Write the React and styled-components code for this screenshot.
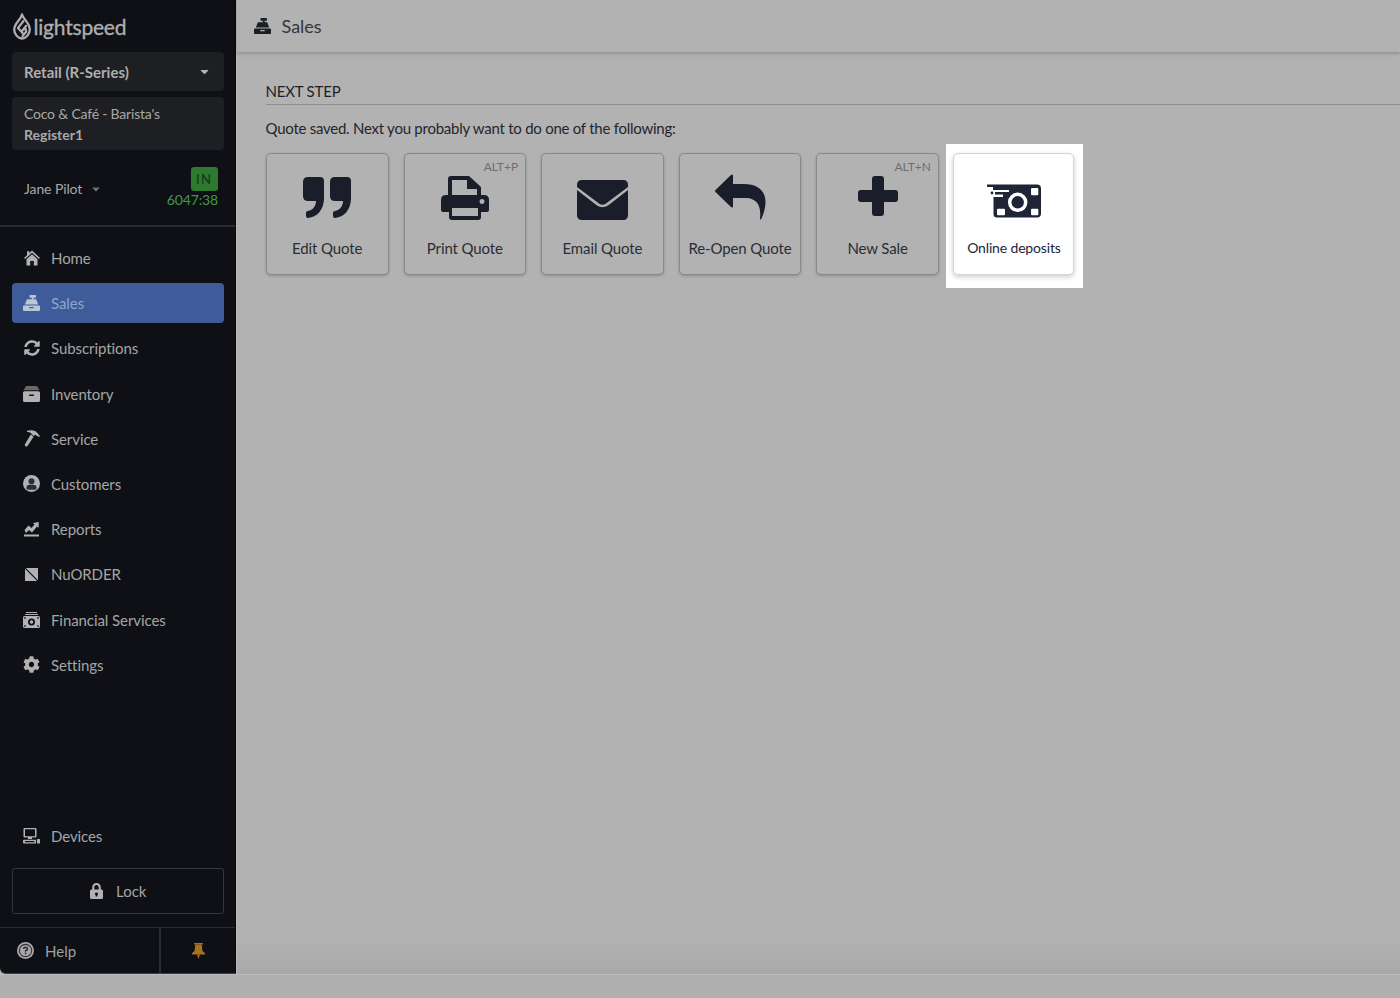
import React from 'react';
import styled, { createGlobalStyle } from 'styled-components';
import { FaSyncAlt, FaCog, FaCaretDown } from 'react-icons/fa';

const Global = createGlobalStyle`
  html, body { margin: 0; padding: 0; height: 100%; background: #b0b0b0; overflow: hidden; }
  body { font-family: Lato, "Open Sans", "Liberation Sans", sans-serif; }
`;

const Page = styled.div`
  width: 1400px; height: 998px; display: flex; flex-direction: column; background: #b0b0b0;
`;
const Top = styled.div`display: flex; height: 974px; flex: none;`;
const Strip = styled.div`flex: 1; background: #afafaf; border-top: 1px solid #bbbbbb;`;

const Sidebar = styled.aside`
  width: 236px; flex: none; display: flex; flex-direction: column; background: #0e1015;
  border-bottom-left-radius: 6px; border-right: 1px solid #08090c; border-bottom: 1px solid #3c3e44; box-sizing: border-box;
  color: #b4b4b4;
`;
const LogoRow = styled.div`
  height: 52px; padding: 0 0 0 12.5px; display: flex; align-items: center; gap: 3px; box-sizing: border-box; color: #aeaeae; flex: none;
`;
const LogoText = styled.span`
  font-size: 21px; font-weight: 400; letter-spacing: -0.2px; line-height: 1; -webkit-text-stroke: 0.35px currentColor;
`;
const Select = styled.div`
  margin: 0 11px 0 11.5px; height: 39px; background: #1d1f23; border-radius: 4px; display: flex; align-items: center; flex: none;
  justify-content: space-between; padding: 0 13.5px 0 12.5px; font-size: 15px; font-weight: 700; color: #aeaeae;
`;
const Store = styled.div`
  margin: 6px 11px 0 11.5px; height: 53px; background: #1d1f23; border-radius: 4px; padding: 7px 12px 0 12.5px; flex: none;
  box-sizing: border-box; font-size: 14px; line-height: 20.5px; color: #a9a9a9; letter-spacing: -0.2px;
`;
const StoreStrong = styled.span`font-weight: 700; color: #aaa; display: block; letter-spacing: 0;`;
const UserRow = styled.div`
  margin-top: 17px; padding: 0 17px 0 24px; display: flex; justify-content: space-between; align-items: flex-start; height: 42px; flex: none;
`;
const UserName = styled.div`display: flex; align-items: center; gap: 8px; font-size: 14px; color: #a8a8a8; letter-spacing: -0.1px; margin-top: 13px;`;
const Clock = styled.div`display: flex; flex-direction: column; align-items: flex-end;`;
const InBadge = styled.div`
  width: 27.5px; height: 24px; background: #2e7a2f; border-radius: 3px; color: #123318; font-size: 13px; letter-spacing: 1.5px;
  display: flex; align-items: center; justify-content: center;
`;
const Timer = styled.div`font-size: 14px; line-height: 17px; color: #409a42; letter-spacing: -0.15px;`;
const Divider = styled.div`height: 2px; background: #2a2c31; margin-top: 16px; flex: none;`;
const Nav = styled.nav`display: flex; flex-direction: column; gap: 5.2px; padding: 11px 11px 0 11.5px;`;
const NavItem = styled.div`
  height: 40px; flex: none; display: flex; align-items: center; padding-left: 11.5px; gap: 11px; border-radius: 4px; font-size: 15px;
  letter-spacing: -0.08px;
  color: ${p => (p.$active ? '#8fa5cc' : '#a6a6a6')};
  background: ${p => (p.$active ? '#3d5c99' : 'transparent')};
  svg { color: ${p => (p.$active ? '#bcc5d6' : '#b2b2b2')}; }
`;
const BottomNav = styled(NavItem)`margin: 0 11px 0 11.5px;`;
const IconSlot = styled.span`width: 17px; height: 17px; display: flex; align-items: center; justify-content: center; flex: none;`;
const Spacer = styled.div`flex: 1;`;
const LockButton = styled.div`
  margin: 12px 11px 0 11.5px; height: 46px; flex: none; border: 1px solid #34373f; border-radius: 3px; box-sizing: border-box;
  display: flex; align-items: center; justify-content: center; gap: 13px; font-size: 15px; color: #a4a4a4;
  padding-left: 1px;
  svg { color: #b2b2b2; }
`;
const Foot = styled.div`
  margin-top: 13px; height: 46px; flex: none; border-top: 1px solid #2a2c32; display: flex; box-sizing: border-box;
`;
const HelpCell = styled.div`
  width: 161px; box-sizing: border-box; border-right: 2px solid #2a2c32; display: flex; align-items: center; gap: 11px; padding-left: 17px;
  font-size: 15px; color: #a0a0a0; flex: none;
`;
const PinCell = styled.div`flex: 1; display: flex; align-items: center; justify-content: center; color: #a8701f; padding-left: 1px;`;

const Main = styled.main`
  flex: 1; display: flex; flex-direction: column; min-width: 0; border-left: 1px solid #b9b9b9;
  background: linear-gradient(to bottom, #b2b2b2 calc(100% - 34px), #a9a9a9 100%);
`;
const Header = styled.header`
  height: 52px; flex: none; display: flex; align-items: center; gap: 10.5px; padding: 0 0 1px 17px; box-sizing: border-box;
  background: #b2b2b2; box-shadow: 0 1px 4px rgba(0,0,0,0.26); color: #1b1e27;
`;
const Title = styled.h1`font-size: 18px; font-weight: 400; margin: 0; color: #33363b;`;
const Content = styled.div`padding: 30px 0 0 28.5px;`;
const SectionTitle = styled.div`
  font-size: 15px; line-height: 18px; color: #1d1f25; padding-bottom: 4px; border-bottom: 1px solid #8f8f8f; letter-spacing: -0.2px;
`;
const Lead = styled.p`margin: 14px 0 0; font-size: 15px; line-height: 18px; color: #24262c; letter-spacing: -0.25px;`;
const Row = styled.div`display: flex; margin: 16px 0 0 0.5px; gap: 15.1px;`;
const Tile = styled.div`
  position: relative; width: 122.5px; height: 122px; box-sizing: border-box; border: 1px solid #898989; border-radius: 5px;
  background: #b2b2b2; box-shadow: 0 1px 3px rgba(0,0,0,0.22); display: flex; flex-direction: column; align-items: center;
  color: #1a1e2b;
`;
const Spot = styled.div`
  background: #fff; margin: -9px 0 0 -8px; padding: 9px 8.5px 13px 7.5px; flex: none; height: 144px; box-sizing: border-box;
`;
const SpotTile = styled(Tile)`
  background: #fff; width: 121px; border-color: #d4d4d4; box-shadow: 0 2px 5px rgba(0,0,0,0.2);
`;
const TileIcon = styled.div`
  width: 100%; height: 60px; flex: none; margin-top: 14px; display: flex; align-items: center; justify-content: center;
  svg { transform: translateY(${p => p.$dy || 0}px); }
`;
const TileLabel = styled.div`
  font-size: 15px; line-height: 18px; margin-top: 11px; color: ${p => (p.$spot ? '#20263a' : '#2b2d33')}; white-space: nowrap;
  letter-spacing: -0.12px;
  ${p => p.$spot && 'font-size: 14px; letter-spacing: -0.15px;'}
`;
const Shortcut = styled.span`position: absolute; top: 6px; right: 7px; font-size: 12px; line-height: 14px; color: #6e6e6e;`;

const Flame = () => (
  <svg width="18" height="27" viewBox="0 0 18 27" fill="none" stroke="currentColor" strokeLinejoin="round" strokeLinecap="round">
    <path strokeWidth="2.3" d="M9 1.500 C9.500 5 16.800 10 16.800 16.500 C16.800 21.500 13 25.200 9 25.500 C5 25.200 1.200 21.500 1.200 16.500 C1.200 10.500 8 6.500 9 1.500 Z" />
    <path strokeWidth="2.3" d="M10.500 8 L5 15 L9.500 20 M13 13 L9 18 M12.500 15.500 L13.200 18.800 L9.500 23" />
  </svg>
);
const QuoteIcon = () => (
  <svg width="48" height="41" viewBox="0 0 48 41" fill="currentColor">
    <path d="M5 0 H17 Q21 0 21 4 V21 C21 33 14 40 5 41 Q3 41 3 39 V36 Q3 34 5 34 C10 33 13 29 13 24 H5 Q0 24 0 19 V5 Q0 0 5 0 Z" />
    <path d="M32 0 H44 Q48 0 48 4 V21 C48 33 41 40 32 41 Q30 41 30 39 V36 Q30 34 32 34 C37 33 40 29 40 24 H32 Q27 24 27 19 V5 Q27 0 32 0 Z" />
  </svg>
);
const PrinterIcon = () => (
  <svg width="48" height="44" viewBox="0 0 48 44" fill="currentColor" fillRule="evenodd">
    <path d="M10 0 H28 L40 11 V19 H43 Q48 19 48 24 V34 Q48 36 46 36 H40 V41 Q40 44 37 44 H11 Q8 44 8 41 V36 H2 Q0 36 0 34 V24 Q0 19 5 19 H7 V3 Q7 0 10 0 Z M11 4 V19 H36 V13 H26 V4 Z M11 32 V40 H37 V32 Z M41 23 A2.500 2.500 0 1 0 41.010 23 Z" />
  </svg>
);
const EnvelopeIcon = () => (
  <svg width="51" height="40" viewBox="0 0 51 40" fill="currentColor">
    <path d="M5 0 H46 Q51 0 51 5 V7 L29 23.500 Q25.500 26 22 23.500 L0 7 V5 Q0 0 5 0 Z" />
    <path d="M0 10 L20 25.500 Q25.500 29 31 25.500 L51 10 V35 Q51 40 46 40 H5 Q0 40 0 35 Z" />
  </svg>
);
const ReplyIcon = () => (
  <svg width="51" height="46" viewBox="0 0 51 46" fill="currentColor">
    <path d="M16 1 Q18 -0.500 18 2 V10 H29 C43 10 50.500 17 50.500 28 C50.500 35 48 41 46 45.500 Q45 46 45 44 C46 36 45 24 30 24 H18 V32 Q18 34.500 16 33 L0.500 18 Q-0.500 17 0.500 16 Z" />
  </svg>
);
const PlusIcon = () => (
  <svg width="40" height="40" viewBox="0 0 40 40" fill="currentColor">
    <path d="M17 0 H23 Q26 0 26 3 V14 H37 Q40 14 40 17 V23 Q40 26 37 26 H26 V37 Q26 40 23 40 H17 Q14 40 14 37 V26 H3 Q0 26 0 23 V17 Q0 14 3 14 H14 V3 Q14 0 17 0 Z" />
  </svg>
);
const DepositIcon = () => (
  <svg width="54" height="34" viewBox="0 0 54 34" fill="#1f2536">
    <path d="M0 0.500 H50 Q54 0.500 54 4.500 V29.500 Q54 33.500 50 33.500 H10 Q6.500 33.500 6.500 30 V13 H16 V10.500 H8 V8 H22 V6 H6 V3 H0 Z" />
    <circle cx="30.700" cy="18.300" r="8" fill="none" stroke="#fff" strokeWidth="3.500" />
    <rect fill="#fff" x="44" y="4" width="7.300" height="7.300" rx="1" />
    <rect fill="#fff" x="44" y="24.700" width="7.300" height="6.600" rx="1" />
    <rect fill="#fff" x="10" y="24.700" width="8" height="6.600" rx="1" />
    <circle cx="5" cy="9" r="1.400" />
  </svg>
);
const RegisterIcon = () => (
  <svg width="17" height="16" viewBox="0 0 17 16" fill="currentColor" fillRule="evenodd">
    <rect x="6.500" y="0" width="6.500" height="2.800" rx="0.800" />
    <rect x="8.800" y="2.500" width="2" height="2" />
    <path d="M4 4.300 H13.200 L15.200 9.600 H1.800 Z" />
    <path d="M1 10.600 H16 Q17 10.600 17 11.600 V15 Q17 16 16 16 H1 Q0 16 0 15 V11.600 Q0 10.600 1 10.600 Z M6.300 12 V13.200 H10.700 V12 Z" />
  </svg>
);
const HomeIcon = () => (
  <svg width="16" height="16" viewBox="0 0 16 16" fill="currentColor">
    <path d="M8 0.500 L16 8 L14.900 9.100 L8 2.800 L1.100 9.100 L0 8 L3 5.200 V1.300 H5.300 V3.100 Z" />
    <path d="M2.500 9.300 L8 4.200 L13.500 9.300 V15.500 H9.800 V11 H6.200 V15.500 H2.500 Z" />
  </svg>
);
const ArchiveIcon = () => (
  <svg width="17" height="16" viewBox="0 0 17 16" fill="currentColor" fillRule="evenodd">
    <path opacity="0.55" d="M3 0 H14 L16.500 4.300 H0.500 Z" />
    <path d="M1.500 5.300 H15.500 Q17 5.300 17 6.800 V14.500 Q17 16 15.500 16 H1.500 Q0 16 0 14.500 V6.800 Q0 5.300 1.500 5.300 Z M6.200 8.500 V10 H10.800 V8.500 Z" />
  </svg>
);
const HammerIcon = () => (
  <svg width="16" height="17" viewBox="0 0 16 17" fill="currentColor">
    <path d="M3 0.800 Q8 -0.700 12 1.500 L16 6 L15 7 L11 4.800 L9.800 6 L7.800 4.200 L6.500 2.800 Q5 1.800 3 2 Z" />
    <path d="M6.800 4.500 L9.600 6.800 L3.500 16 Q2.500 17 1.200 16 Q0.500 15.200 1 14.300 Z" />
  </svg>
);
const PersonIcon = () => (
  <svg width="17" height="17" viewBox="0 0 17 17">
    <circle cx="8.500" cy="8.500" r="8.500" fill="currentColor" />
    <circle cx="8.500" cy="6.300" r="3" fill="#2a2d38" />
    <path d="M3.500 14.200 V12.500 Q3.500 9.800 6.500 9.800 H10.500 Q13.500 9.800 13.500 12.500 V14.200 Q8.500 15.500 3.500 14.200 Z" fill="#2a2d38" />
  </svg>
);
const NuorderIcon = () => (
  <svg width="13" height="13" viewBox="0 0 13 13">
    <rect width="13" height="13" fill="currentColor" />
    <path d="M0 0 L13 13" stroke="#0e1015" strokeWidth="1.200" />
  </svg>
);
const ReportIcon = () => (
  <svg width="15" height="15" viewBox="0 0 15 15" fill="currentColor">
    <path d="M0.500 8 L4.500 3.500 L7.500 6 L10.500 2.500 L9 1 L14.800 0 L14.500 6 L13 4.500 L8 10.500 L5 8 L2 11 Z" />
    <rect y="12.500" width="15" height="2" />
  </svg>
);
const MoneyIcon = () => (
  <svg width="17" height="16" viewBox="0 0 17 16" fill="currentColor" fillRule="evenodd">
    <rect x="3" y="0" width="11" height="1" />
    <rect x="2" y="2" width="13" height="1" />
    <path d="M1.500 4 H15.500 Q17 4 17 5.500 V14.500 Q17 16 15.500 16 H1.500 Q0 16 0 14.500 V5.500 Q0 4 1.500 4 Z M8.500 6.500 A3.500 3.500 0 1 0 8.510 13.500 A3.500 3.500 0 1 0 8.500 6.500 Z M8.500 8.200 A1.800 1.800 0 1 1 8.490 11.800 A1.800 1.800 0 1 1 8.500 8.200 Z M1.200 5.200 V6.700 H2.700 V5.200 Z M14.300 5.200 V6.700 H15.800 V5.200 Z M1.200 13.300 V14.800 H2.700 V13.300 Z M14.300 13.300 V14.800 H15.800 V13.300 Z" />
  </svg>
);
const DevicesIcon = () => (
  <svg width="17" height="16" viewBox="0 0 17 16" fill="currentColor" fillRule="evenodd">
    <path d="M1.500 0 H12.500 Q13.500 0 13.500 1 V8.500 Q13.500 9.500 12.500 9.500 H9 V11 H5 V9.500 H1.500 Q0.500 9.500 0.500 8.500 V1 Q0.500 0 1.500 0 Z M2 1.300 V8.200 H12 V1.300 Z" />
    <path d="M1 11.800 H13 V15.500 H1 Q0 15.500 0 14.500 V12.800 Q0 11.800 1 11.800 Z M2 13 V14.300 H11.500 V13 Z" />
    <rect x="14" y="11" width="3" height="4.500" rx="0.500" />
  </svg>
);
const LockIcon = () => (
  <svg width="13" height="16" viewBox="0 0 13 16" fill="currentColor" fillRule="evenodd">
    <path d="M6.500 0 C9 0 10.800 1.800 10.800 4.200 V6.500 H11.500 Q13 6.500 13 8 V14.500 Q13 16 11.500 16 H1.500 Q0 16 0 14.500 V8 Q0 6.500 1.500 6.500 H2.200 V4.200 C2.200 1.800 4 0 6.500 0 Z M6.500 2 C5.200 2 4.300 3 4.300 4.300 V6.500 H8.700 V4.300 C8.700 3 7.800 2 6.500 2 Z M6.500 9.500 A1.500 1.500 0 0 0 5.700 12.300 V13.500 H7.300 V12.300 A1.500 1.500 0 0 0 6.500 9.500 Z" />
  </svg>
);
const HelpIcon = () => (
  <svg width="17" height="17" viewBox="0 0 17 17">
    <circle cx="8.500" cy="8.500" r="8.500" fill="#a8a8a8" />
    <circle cx="8.500" cy="8.500" r="6.700" fill="#33353a" />
    <circle cx="8.500" cy="8.500" r="5.600" fill="#a8a8a8" />
    <path d="M6.500 7 Q6.700 5.200 8.600 5.200 Q10.500 5.300 10.500 6.900 Q10.400 8 8.600 8.800 V9.800" fill="none" stroke="#2a2c31" strokeWidth="1.500" />
    <rect x="7.800" y="10.600" width="1.600" height="1.600" fill="#2a2c31" />
  </svg>
);
const PinIcon = () => (
  <svg width="13" height="16" viewBox="0 0 13 16" fill="currentColor">
    <rect x="2" y="0" width="9" height="1.600" rx="0.400" />
    <path d="M3.300 1.600 H9.700 L10.500 8 L13 10.300 V11.500 H0 V10.300 L2.500 8 Z" />
    <path d="M5 11.500 H8 L6.500 16 Z" />
  </svg>
);

const navItems = [
  ['Home', <HomeIcon />],
  ['Sales', <RegisterIcon />, true],
  ['Subscriptions', <FaSyncAlt size={16} />],
  ['Inventory', <ArchiveIcon />],
  ['Service', <HammerIcon />],
  ['Customers', <PersonIcon />],
  ['Reports', <ReportIcon />],
  ['NuORDER', <NuorderIcon />],
  ['Financial Services', <MoneyIcon />],
  ['Settings', <FaCog size={17} />],
];

const tiles = [
  ['Edit Quote', <QuoteIcon />, null, -1],
  ['Print Quote', <PrinterIcon />, 'ALT+P', 0],
  ['Email Quote', <EnvelopeIcon />, null, 2],
  ['Re-Open Quote', <ReplyIcon />, null, -1],
  ['New Sale', <PlusIcon />, 'ALT+N', -2],
];

export default function App() {
  return (
    <Page>
      <Global />
      <Top>
        <Sidebar>
          <LogoRow><Flame /><LogoText>lightspeed</LogoText></LogoRow>
          <Select>Retail (R-Series)<FaCaretDown size={13} color="#b4b4b4" /></Select>
          <Store>Coco &amp; Café - Barista's<StoreStrong>Register1</StoreStrong></Store>
          <UserRow>
            <UserName>Jane Pilot <FaCaretDown size={12} color="#6f7074" /></UserName>
            <Clock><InBadge>IN</InBadge><Timer>6047:38</Timer></Clock>
          </UserRow>
          <Divider />
          <Nav>
            {navItems.map(([label, icon, active]) => (
              <NavItem key={label} $active={active}><IconSlot>{icon}</IconSlot>{label}</NavItem>
            ))}
          </Nav>
          <Spacer />
          <BottomNav><IconSlot><DevicesIcon /></IconSlot>Devices</BottomNav>
          <LockButton><LockIcon />Lock</LockButton>
          <Foot>
            <HelpCell><HelpIcon />Help</HelpCell>
            <PinCell><PinIcon /></PinCell>
          </Foot>
        </Sidebar>
        <Main>
          <Header><RegisterIcon /><Title>Sales</Title></Header>
          <Content>
            <SectionTitle>NEXT STEP</SectionTitle>
            <Lead>Quote saved. Next you probably want to do one of the following:</Lead>
            <Row>
              {tiles.map(([label, icon, key, dy]) => (
                <Tile key={label}>
                  {key && <Shortcut>{key}</Shortcut>}
                  <TileIcon $dy={dy}>{icon}</TileIcon>
                  <TileLabel>{label}</TileLabel>
                </Tile>
              ))}
              <Spot>
                <SpotTile>
                  <TileIcon $dy={3}><DepositIcon /></TileIcon>
                  <TileLabel $spot>Online deposits</TileLabel>
                </SpotTile>
              </Spot>
            </Row>
          </Content>
        </Main>
      </Top>
      <Strip />
    </Page>
  );
}
